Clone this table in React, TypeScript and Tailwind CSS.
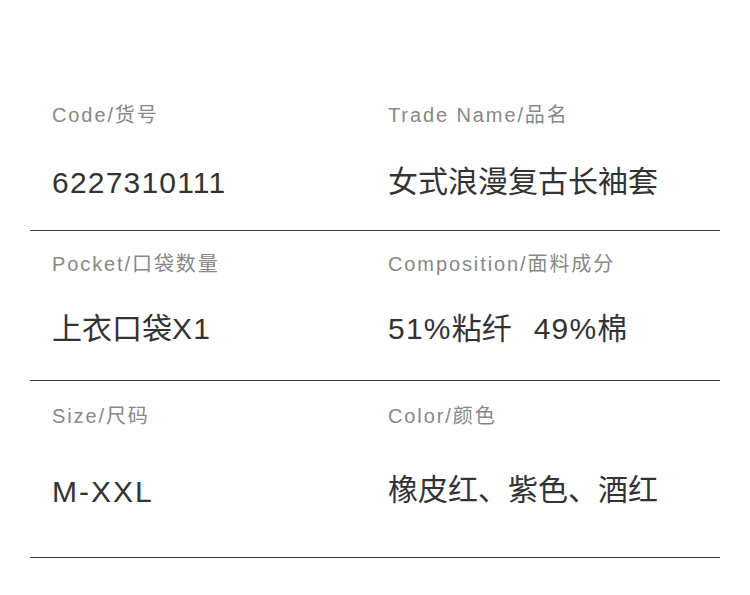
import React from "react";

const font = { fontFamily: '"Liberation Sans", "Noto Sans CJK SC", sans-serif' };

function Mixed({ text }: { text: string }) {
  const parts = text.match(/[\u0000-\u2FFF]+|[^\u0000-\u2FFF]+/g) || [];
  return (
    <>
      {parts.map((p, i) =>
        /[\u0000-\u2FFF]/.test(p[0]) ? (
          <span key={i} className="tracking-[1.2px]">{p}</span>
        ) : (
          <span key={i}>{p}</span>
        )
      )}
    </>
  );
}

function Cell({ label, value, mt, gap, left }: { label: string; value: React.ReactNode; mt: string; gap: string; left?: boolean }) {
  return (
    <div className={`flex flex-col ${left ? "pl-[22px]" : "pl-0"}`}>
      <div className={`${mt} text-[20px] leading-[24px] tracking-[1.9px] text-[#888888] whitespace-nowrap`}>{label}</div>
      <div className={`${gap} text-[30px] leading-[36px] text-[#333333] whitespace-nowrap`}>{value}</div>
    </div>
  );
}

export default function App() {
  return (
    <div className="w-[750px] h-[595px] bg-white" style={font}>
      <div className="ml-[30px] w-[690px]">
        <div className="h-[231px] border-b border-[#3a3a3a] grid grid-cols-[358px_1fr]">
          <Cell left label="Code/货号" value={<Mixed text="6227310111" />} mt="mt-[103px]" gap="mt-[38px]" />
          <Cell label="Trade Name/品名" value="女式浪漫复古长袖套" mt="mt-[103px]" gap="mt-[37px]" />
        </div>
        <div className="h-[150px] border-b border-[#3a3a3a] grid grid-cols-[358px_1fr]">
          <Cell left label="Pocket/口袋数量" value={<Mixed text="上衣口袋X1" />} mt="mt-[21px]" gap="mt-[35px]" />
          <Cell
            label="Composition/面料成分"
            value={
              <span>
                <Mixed text="51%粘纤" />
                <span className="inline-block w-[22px]" />
                <Mixed text="49%棉" />
              </span>
            }
            mt="mt-[21px]"
            gap="mt-[35px]"
          />
        </div>
        <div className="h-[177px] border-b border-[#3a3a3a] grid grid-cols-[358px_1fr]">
          <Cell left label="Size/尺码" value={<span className="tracking-[2px]">M-XXL</span>} mt="mt-[23px]" gap="mt-[46px]" />
          <Cell label="Color/颜色" value="橡皮红、紫色、酒红" mt="mt-[23px]" gap="mt-[44px]" />
        </div>
      </div>
    </div>
  );
}
